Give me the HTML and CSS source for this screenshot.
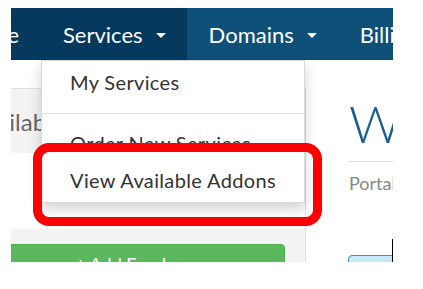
FILE: index.html
```html
<!DOCTYPE html>
<html>
<head>
<meta charset="utf-8">
<title>Client Area</title>
<link rel="stylesheet" href="styles.css">
</head>
<body>
<div class="frame">
  <nav class="navbar">
    <div class="nav-item nav-dark nav-home"><span>Home</span></div>
    <div class="nav-item nav-dark"><span>Services</span><i class="caret"></i>
      <ul class="dropdown">
        <li>My Services</li>
        <li class="divider"></li>
        <li>Order New Services</li>
        <li>View Available Addons</li>
      </ul>
    </div>
    <div class="nav-item"><span>Domains</span><i class="caret"></i></div>
    <div class="nav-item"><span>Billing</span><i class="caret"></i></div>
  </nav>
  <div class="content">
    <aside class="sidebar">
      <div class="card">
        <div class="card-head">Available Credit</div>
        <div class="card-body"></div>
        <div class="card-foot"><div class="btn-success">+ Add Funds</div></div>
      </div>
    </aside>
    <main class="main">
      <h1 class="title">Welcome Back</h1>
      <hr class="rule">
      <div class="crumb">Portal Home</div>
      <div class="alert"></div>
    </main>
  </div>
  <div class="highlight"></div>
  <div class="cursor-line"></div>
</div>
</body>
</html>
```
FILE: styles.css
```css
* { box-sizing: border-box; }
html, body { margin: 0; padding: 0; background: #fff; }
body { font-family: Lato, "Open Sans", sans-serif; }

.frame {
  position: relative;
  margin: 8px 0 0 11px;
  width: 382px;
  height: 254px;
  overflow: hidden;
  background: #fff;
}

.navbar { display: flex; height: 52px; background: #0e5078; }
.nav-item {
  position: relative;
  display: flex;
  align-items: center;
  flex: none;
  color: #fff;
  font-size: 22px;
  padding: 0 21px 0 22px;
  white-space: nowrap;
}
.nav-dark { background: #053a5e; }
.nav-home { width: 30px; justify-content: flex-end; padding: 0 22px 0 0; }
.caret {
  display: block;
  width: 0;
  height: 0;
  border-left: 5px solid transparent;
  border-right: 5px solid transparent;
  border-top: 5px solid #fff;
  margin: 2px 0 0 13px;
}

.dropdown {
  position: absolute;
  top: 100%;
  left: 0;
  width: 264px;
  margin: 0;
  padding: 3px 0;
  list-style: none;
  background: #fff;
  border: 1px solid rgba(0,0,0,.15);
  box-shadow: 0 6px 12px rgba(0,0,0,.175);
  z-index: 5;
}
.dropdown li {
  height: 37px;
  line-height: 37px;
  padding: 0 28px;
  font-size: 20px;
  letter-spacing: 0.35px;
  color: #333;
}
.dropdown .divider { height: 1px; padding: 0; margin: 12px 0 11px; background: #e5e5e5; }

.content { display: flex; height: 202px; }
.sidebar { width: 295px; flex: none; }
.card {
  margin: 28px 0 0 -62px;
  border: 1px solid #e0e0e0;
  background: #fff;
}
.card-head {
  height: 64px;
  display: flex;
  align-items: center;
  padding-left: 20px;
  background: #f3f3f3;
  font-size: 24px;
  color: #666;
  white-space: nowrap;
}
.card-body { height: 76px; }
.card-foot { padding: 15px 20px 15px 14px; background: #f3f3f3; }
.btn-success {
  background: #5cb85c;
  border: 1px solid #4cae4c;
  border-radius: 4px;
  color: #fff;
  font-size: 18px;
  line-height: 26px;
  padding: 6px 12px 8px;
  text-align: center;
}

.main { flex: 1; min-width: 0; padding-left: 43px; }
.title {
  margin: 32px 0 0;
  font-size: 52px;
  font-weight: 300;
  line-height: 62px;
  color: #1a5f8f;
  white-space: nowrap;
}
.rule { margin: 7px 0 0 -1px; border: 0; border-top: 1px solid #ddd; height: 0; }
.crumb { margin-top: 10px; font-size: 18px; line-height: 22px; color: #888; white-space: nowrap; }
.alert {
  margin: 61px 0 0 -1px;
  height: 40px;
  width: 200px;
  background: #c6e9f8;
  border: 1px solid #3f92c4;
  border-radius: 4px;
}

.highlight {
  position: absolute;
  left: 22px;
  top: 135px;
  width: 289px;
  height: 83px;
  border: 9px solid #f00;
  border-radius: 16px;
  z-index: 10;
}
.cursor-line {
  position: absolute;
  left: 381px;
  top: 231px;
  width: 1px;
  height: 23px;
  background: #000;
  z-index: 11;
}
```
